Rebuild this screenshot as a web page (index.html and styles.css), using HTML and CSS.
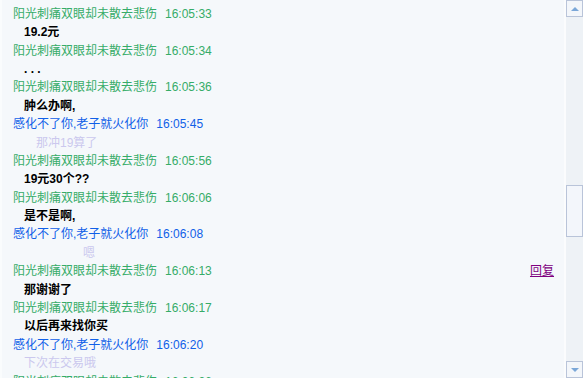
FILE: index.html
```html
<!DOCTYPE html>
<html>
<head>
<meta charset="UTF-8">
<title>聊天记录</title>
<link rel="stylesheet" href="styles.css">
</head>
<body>
	<div class="chat">
		<div class="log">
			<div class="list">
				<div class="msg">们</div>
				<div class="who green"><span>阳光刺痛双眼却未散去悲伤<span class="time">16:05:33</span></span></div>
				<div class="msg">19.2元</div>
				<div class="who green"><span>阳光刺痛双眼却未散去悲伤<span class="time">16:05:34</span></span></div>
				<div class="msg">. . .</div>
				<div class="who green"><span>阳光刺痛双眼却未散去悲伤<span class="time">16:05:36</span></span></div>
				<div class="msg">肿么办啊,</div>
				<div class="who blue"><span>感化不了你,老子就火化你<span class="time">16:05:45</span></span></div>
				<div class="msg faint in1">那冲19算了</div>
				<div class="who green"><span>阳光刺痛双眼却未散去悲伤<span class="time">16:05:56</span></span></div>
				<div class="msg">19元30个??</div>
				<div class="who green"><span>阳光刺痛双眼却未散去悲伤<span class="time">16:06:06</span></span></div>
				<div class="msg">是不是啊,</div>
				<div class="who blue"><span>感化不了你,老子就火化你<span class="time">16:06:08</span></span></div>
				<div class="msg faint in2">嗯</div>
				<div class="who green"><span>阳光刺痛双眼却未散去悲伤<span class="time">16:06:13</span></span><a href="#" class="reply">回复</a></div>
				<div class="msg">那谢谢了</div>
				<div class="who green"><span>阳光刺痛双眼却未散去悲伤<span class="time">16:06:17</span></span></div>
				<div class="msg">以后再来找你买</div>
				<div class="who blue"><span>感化不了你,老子就火化你<span class="time">16:06:20</span></span></div>
				<div class="msg faint">下次在交易哦</div>
				<div class="who green"><span>阳光刺痛双眼却未散去悲伤<span class="time">16:06:26</span></span></div>
			</div>
		</div>
		<div class="scroll">
			<div class="btn"><span class="up"></span></div>
			<div class="track">
				<div class="thumb"></div>
			</div>
			<div class="btn"><span class="down"></span></div>
		</div>
	</div>
</body>
</html>
```

FILE: styles.css
```css
html, body{
	margin: 0;
	padding: 0;
}
body{
	width: 583px;
	height: 378px;
	overflow: hidden;
	background-color: #f5f8fb;
	font-family: "Liberation Sans", "Noto Sans CJK SC", sans-serif;
	font-size: 12px;
}
.chat{
	display: flex;
	height: 378px;
}
.log{
	flex: 1;
	overflow: hidden;
	border-left: 2px solid #fafcfd;
	border-right: 2px solid #fbfcfd;
}
.list{
	margin-top: -13.6px;
}
.who, .msg{
	height: 18.4px;
	line-height: 18.4px;
	white-space: nowrap;
}
.who{
	display: flex;
	justify-content: space-between;
	padding-left: 11px;
	padding-right: 10px;
}
.time{
	margin-left: 8px;
}
.green{
	color: #36ac68;
}
.blue{
	color: #1060e8;
}
.msg{
	padding-left: 22px;
	font-weight: bold;
	color: #000;
}
.faint{
	font-weight: normal;
	color: #cbc8ee;
}
.in1{
	padding-left: 34px;
}
.in2{
	padding-left: 81px;
}
.reply{
	color: #800080;
	text-decoration: underline;
}

/* 스크롤바 */
.scroll{
	width: 17px;
	display: flex;
	flex-direction: column;
	background-color: #eef2f6;
}
.btn{
	height: 15px;
	border: 1px solid #b9c4d9;
	background-color: #f3f6fa;
	display: flex;
	align-items: center;
	justify-content: center;
}
.up{
	width: 0;
	height: 0;
	border-left: 4px solid transparent;
	border-right: 4px solid transparent;
	border-bottom: 4px solid #7ba7d8;
}
.down{
	width: 0;
	height: 0;
	border-left: 4px solid transparent;
	border-right: 4px solid transparent;
	border-top: 4px solid #7ba7d8;
}
.track{
	flex: 1;
	padding-top: 168px;
}
.thumb{
	height: 50px;
	border: 1px solid #b9c4d9;
	background-color: #f3f6fb;
}
```
